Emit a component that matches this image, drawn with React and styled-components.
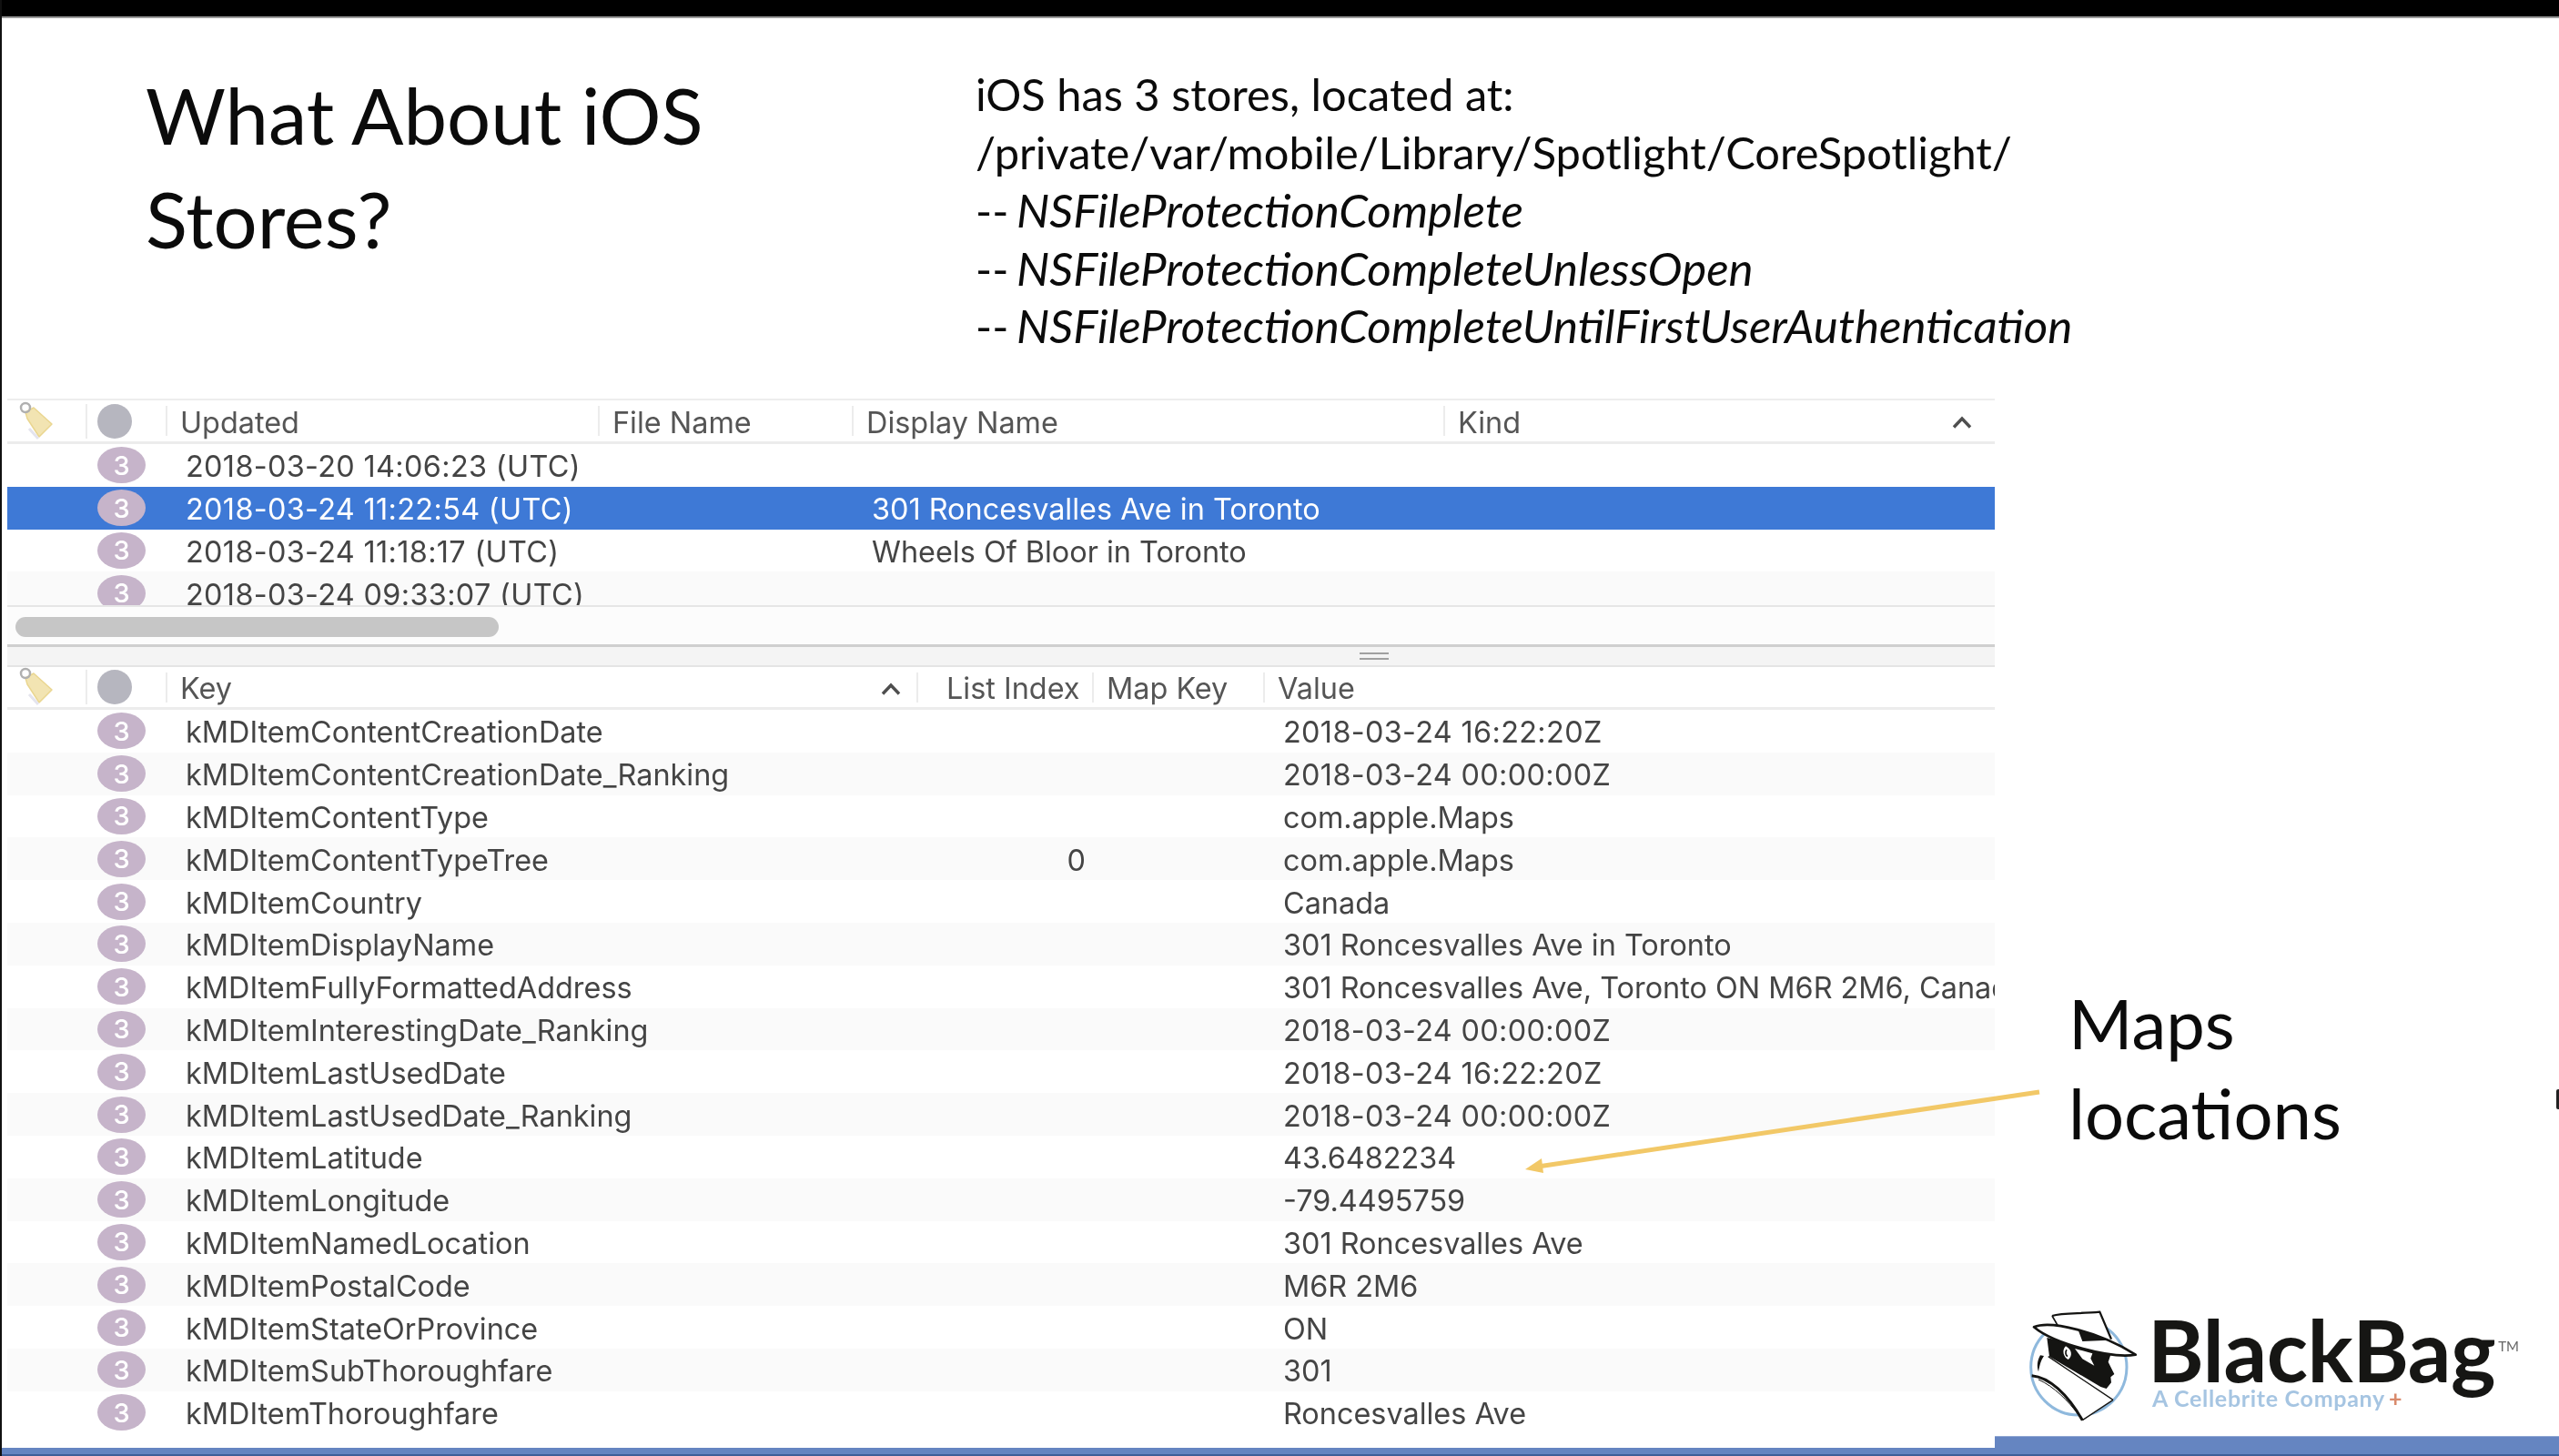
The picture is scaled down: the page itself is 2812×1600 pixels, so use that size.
import React from "react";
import styled, { createGlobalStyle } from "styled-components";

const Global = createGlobalStyle`
  html, body { margin: 0; padding: 0; background: #fff; }
  * { box-sizing: border-box; }
`;

const Page = styled.div`
  position: relative;
  width: 2812px;
  height: 1600px;
  overflow: hidden;
  display: flex;
  flex-direction: column;
  background: #fff;
  border-left: 2px solid #111;
  filter: blur(0.5px);
`;
const TopBar = styled.div`
  height: 20px;
  flex: none;
  background: #000;
  border-bottom: 2px solid #9a9a9a;
  margin-left: -2px;
`;
const Head = styled.header`
  height: 418px;
  flex: none;
  display: flex;
  padding: 50px 0 0 158px;
`;
const Title = styled.h1`
  width: 912px;
  margin: 0;
  font: 400 85px/113.5px Lato, "Open Sans", sans-serif;
  color: #0b0b0b;
`;
const Body = styled.div`
  padding-top: 2px;
  font: 400 48.8px/63.6px Lato, "Open Sans", sans-serif;
  color: #0b0b0b;
  white-space: nowrap;
`;
const BodyLine = styled.div`
  display: flex;
  align-items: baseline;
  height: 63.6px;
`;
const Dash = styled.span`
  width: 45px;
  flex: none;
`;
const Protection = styled.i`
  font-size: 51.1px;
`;
const Workspace = styled.div`
  flex: 1;
  display: flex;
  min-height: 0;
`;
const Panel = styled.section`
  width: 2184px;
  margin-left: 6px;
  flex: none;
  display: flex;
  flex-direction: column;
  font-family: Inter, Roboto, sans-serif;
  font-size: 32.4px;
  color: #444;
  overflow: hidden;
`;
const TOP_COLS = "86px 88px 475px 279px 650px 1fr";
const KEY_COLS = "86px 88px 825px 193px 188px 1fr";
const HeaderRow = styled.div`
  display: grid;
  grid-template-columns: ${(p) => p.$cols};
  align-items: center;
  flex: none;
  background: #fff;
  border-top: 2px solid #ededed;
  border-bottom: 3px solid #ececec;
`;
const TopHeader = styled(HeaderRow)`
  height: 50px;
`;
const KeyHeader = styled(HeaderRow)`
  height: 47px;
  border-top: 0;
`;
const HeadCell = styled.div`
  display: flex;
  align-items: center;
  justify-content: space-between;
  height: 33px;
  padding: 3px ${(p) => p.$end ?? 0}px 0 ${(p) => p.$start ?? 14}px;
  color: #555;
  white-space: nowrap;
  border-left: 2px solid #ececec;
`;
const IconCell = styled.div`
  display: flex;
  align-items: center;
  height: 38px;
  padding-left: ${(p) => p.$pad}px;
`;
const DotCell = styled(IconCell)`
  border-left: 2px solid #ececec;
`;
const StatusDot = styled.span`
  width: 38px;
  height: 38px;
  flex: none;
  border-radius: 50%;
  background: #b6b6bf;
`;
const Rows = styled.div`
  flex: none;
  height: ${(p) => p.$height}px;
  overflow: hidden;
  background: #fff;
`;
const Row = styled.div`
  display: grid;
  grid-template-columns: ${(p) => p.$cols};
  align-items: center;
  height: 46.8px;
  white-space: nowrap;
  background: ${(p) => (p.$selected ? "#3e79d6" : p.$zebra ? "#fafafa" : "#fff")};
  color: ${(p) => (p.$selected ? "#fff" : "#444")};
`;
const Badge = styled.span`
  width: 53px;
  height: 40px;
  margin-left: 13px;
  border-radius: 50%;
  display: flex;
  align-items: center;
  justify-content: center;
  background: #c6b4ca;
  color: #fff;
  font-size: 29px;
  font-weight: 500;
`;
const Cell = styled.span`
  padding: 3px 0 0 22px;
  min-width: 0;
  overflow: hidden;
  line-height: 43px;
  letter-spacing: ${(p) => (p.$date ? "0.34px" : "0")};
`;
const NumCell = styled(Cell)`
  padding: 3px ${(p) => p.$right}px 0 0;
  text-align: right;
`;
const ScrollTrack = styled.div`
  height: 43px;
  flex: none;
  padding: 11px 0 0 9px;
  background: #fcfcfc;
  border-top: 2px solid #e6e6e6;
`;
const ScrollThumb = styled.div`
  width: 531px;
  height: 22px;
  border-radius: 11px;
  background: #c6c6c6;
`;
const Splitter = styled.div`
  height: 25px;
  flex: none;
  display: flex;
  align-items: center;
  padding-left: 1486px;
  background: #f4f4f4;
  border-top: 3px solid #cfcfcf;
  border-bottom: 2px solid #e4e4e4;
`;
const Grip = styled.span`
  width: 32px;
  height: 8px;
  border-top: 2px solid #a0a0a0;
  border-bottom: 2px solid #a0a0a0;
`;
const Aside = styled.aside`
  flex: 1;
  min-width: 0;
  display: flex;
  flex-direction: column;
`;
const MapsNote = styled.div`
  margin: 636px 0 0 81px;
  font: 400 76px/99px Lato, "Open Sans", sans-serif;
  color: #0b0b0b;
`;
const Logo = styled.div`
  margin: auto 0 0 28px;
  display: flex;
  gap: 15px;
  height: 148px;
`;
const LogoWords = styled.div`
  padding-top: 6px;
  display: flex;
  flex-direction: column;
`;
const LogoName = styled.div`
  display: flex;
  align-items: flex-start;
  margin-left: -5px;
  font: 700 94px/94px Lato, "Open Sans", sans-serif;
  letter-spacing: -0.5px;
  color: #161614;
`;
const LogoTm = styled.span`
  margin: 36px 0 0 3px;
  font: 400 15px/15px Lato, sans-serif;
  letter-spacing: 0;
  color: #666;
`;
const LogoSub = styled.div`
  margin-top: -7px;
  font: 700 25px/26px Lato, "Open Sans", sans-serif;
  letter-spacing: 0.7px;
  color: #a6c5e2;
  white-space: nowrap;
`;
const LogoPlus = styled.span`
  color: #d98a6c;
  margin-left: 4px;
`;
const AsideStrip = styled.div`
  height: 13px;
  flex: none;
  background: #6585c1;
  border-top: 1px solid #8ea5d2;
`;
const BottomBar = styled.div`
  height: 9px;
  flex: none;
  margin-left: -2px;
  background: #6585c1;
  border-bottom: 2px solid #3f5f99;
`;
const Overlay = styled.svg`
  position: absolute;
  left: -2px;
  top: 0;
  pointer-events: none;
`;
const EdgeMark = styled.span`
  position: absolute;
  right: 0;
  top: 1197px;
  width: 3px;
  height: 22px;
  border-radius: 2px 0 0 2px;
  background: #222;
`;

const TagIcon = () => (
  <svg width="40" height="44" viewBox="0 0 40 44">
    <path d="M8 12 L17 7 L37 25 L23 39 L10 19 Z" fill="#f2e4b2" stroke="#ead690" strokeWidth="1.5" strokeLinejoin="round" />
    <circle cx="8" cy="7" r="5" fill="none" stroke="#b0b0b0" strokeWidth="2.5" />
    <path d="M12 30 L22 41" stroke="#e4e4ee" strokeWidth="3" fill="none" />
  </svg>
);
const Caret = () => (
  <svg width="22" height="14" viewBox="0 0 22 14" fill="none">
    <path d="M2 12.5 L11 3 L20 12.5" stroke="#4e4e4e" strokeWidth="3.4" />
  </svg>
);
const Detective = () => (
  <svg width="130" height="140" viewBox="0 0 390 420">
    <circle cx="193" cy="217" r="158" fill="#fff" stroke="#8fb9dd" strokeWidth="9" />
    <path d="M38 245 C95 250 150 300 205 392 L306 325 L95 185 L60 230 Z" fill="#fff" />
    <path d="M38 245 C95 250 155 305 205 392" fill="none" stroke="#141412" strokeWidth="9" />
    <path d="M60 258 C110 280 160 330 190 372" fill="none" stroke="#141412" strokeWidth="3" />
    <path d="M205 392 L306 325 M92 182 L306 325" fill="none" stroke="#141412" strokeWidth="4" />
    <path d="M66 178 C56 195 54 215 60 232 C64 210 68 195 78 180 Z" fill="#141412" />
    <path d="M88 120 L300 170 L290 200 L310 240 L298 250 L300 268 L284 288 L265 282 L96 182 Z" fill="#141412" />
    <path d="M150 148 C136 160 142 185 158 192 C172 182 172 160 150 148 Z" fill="#fff" />
    <path d="M153 160 C147 168 150 178 156 182" fill="none" stroke="#141412" strokeWidth="5" />
    <path d="M180 156 L238 172 L232 188 L244 212 L205 190 Z" fill="#fff" />
    <path d="M105 48 C125 38 200 40 262 35 L300 125 L125 85 Z" fill="#fff" />
    <path d="M105 48 C140 36 200 42 262 35 L300 125" fill="none" stroke="#141412" strokeWidth="7" />
    <path d="M105 48 L125 82" fill="none" stroke="#141412" strokeWidth="5" />
    <path d="M45 85 C100 62 260 100 380 176 C300 190 110 140 45 85 Z" fill="#fff" stroke="#141412" strokeWidth="8" strokeLinejoin="round" />
    <path d="M190 92 L292 128 L205 132 Z" fill="#141412" />
  </svg>
);

const recent = [
  { when: "2018-03-20 14:06:23 (UTC)", name: "" },
  { when: "2018-03-24 11:22:54 (UTC)", name: "301 Roncesvalles Ave in Toronto", selected: true },
  { when: "2018-03-24 11:18:17 (UTC)", name: "Wheels Of Bloor in Toronto" },
  { when: "2018-03-24 09:33:07 (UTC)", name: "", zebra: true },
];
const items = [
  ["kMDItemContentCreationDate", "2018-03-24 16:22:20Z"],
  ["kMDItemContentCreationDate_Ranking", "2018-03-24 00:00:00Z"],
  ["kMDItemContentType", "com.apple.Maps"],
  ["kMDItemContentTypeTree", "com.apple.Maps", "0"],
  ["kMDItemCountry", "Canada"],
  ["kMDItemDisplayName", "301 Roncesvalles Ave in Toronto"],
  ["kMDItemFullyFormattedAddress", "301 Roncesvalles Ave, Toronto ON M6R 2M6, Canada"],
  ["kMDItemInterestingDate_Ranking", "2018-03-24 00:00:00Z"],
  ["kMDItemLastUsedDate", "2018-03-24 16:22:20Z"],
  ["kMDItemLastUsedDate_Ranking", "2018-03-24 00:00:00Z"],
  ["kMDItemLatitude", "43.6482234"],
  ["kMDItemLongitude", "-79.4495759"],
  ["kMDItemNamedLocation", "301 Roncesvalles Ave"],
  ["kMDItemPostalCode", "M6R 2M6"],
  ["kMDItemStateOrProvince", "ON"],
  ["kMDItemSubThoroughfare", "301"],
  ["kMDItemThoroughfare", "Roncesvalles Ave"],
];
const protections = [
  "NSFileProtectionComplete",
  "NSFileProtectionCompleteUnlessOpen",
  "NSFileProtectionCompleteUntilFirstUserAuthentication",
];
const isDate = (v) => /^\d{4}-/.test(v);

export default function App() {
  return (
    <>
      <Global />
      <Page>
        <TopBar />
        <Head>
          <Title>What About iOS<br />Stores?</Title>
          <Body>
            <BodyLine>iOS has 3 stores, located at:</BodyLine>
            <BodyLine>/private/var/mobile/Library/Spotlight/CoreSpotlight/</BodyLine>
            {protections.map((p) => (
              <BodyLine key={p}>
                <Dash>--</Dash>
                <Protection>{p}</Protection>
              </BodyLine>
            ))}
          </Body>
        </Head>
        <Workspace>
          <Panel>
            <TopHeader $cols={TOP_COLS}>
              <IconCell $pad={12}><TagIcon /></IconCell>
              <DotCell $pad={11}><StatusDot /></DotCell>
              <HeadCell>Updated</HeadCell>
              <HeadCell>File Name</HeadCell>
              <HeadCell>Display Name</HeadCell>
              <HeadCell $end={25}>Kind<Caret /></HeadCell>
            </TopHeader>
            <Rows $height={177}>
              {recent.map((r) => (
                <Row key={r.when} $cols={TOP_COLS} $selected={r.selected} $zebra={r.zebra}>
                  <span />
                  <Badge>3</Badge>
                  <Cell $date>{r.when}</Cell>
                  <span />
                  <Cell>{r.name}</Cell>
                  <span />
                </Row>
              ))}
            </Rows>
            <ScrollTrack><ScrollThumb /></ScrollTrack>
            <Splitter><Grip /></Splitter>
            <KeyHeader $cols={KEY_COLS}>
              <IconCell $pad={12}><TagIcon /></IconCell>
              <DotCell $pad={11}><StatusDot /></DotCell>
              <HeadCell $end={17}>Key<Caret /></HeadCell>
              <HeadCell $start={31}>List Index</HeadCell>
              <HeadCell>Map Key</HeadCell>
              <HeadCell>Value</HeadCell>
            </KeyHeader>
            {items.map(([k, v, idx], i) => (
              <Row key={k} $cols={KEY_COLS} $zebra={i % 2 === 1}>
                <span />
                <Badge>3</Badge>
                <Cell>{k}</Cell>
                <NumCell $right={7}>{idx}</NumCell>
                <span />
                <Cell $date={isDate(v)}>{v}</Cell>
              </Row>
            ))}
          </Panel>
          <Aside>
            <MapsNote>Maps<br />locations</MapsNote>
            <Logo>
              <Detective />
              <LogoWords>
                <LogoName>BlackBag<LogoTm>TM</LogoTm></LogoName>
                <LogoSub>A Cellebrite Company<LogoPlus>+</LogoPlus></LogoSub>
              </LogoWords>
            </Logo>
            <AsideStrip />
          </Aside>
        </Workspace>
        <BottomBar />
        <Overlay width="2812" height="1600" viewBox="0 0 2812 1600">
          <path d="M2241 1200 L1690 1282" stroke="#f2c867" strokeWidth="5" fill="none" />
          <path d="M1676 1285 L1694 1273 L1696 1289 Z" fill="#f2c867" />
        </Overlay>
        <EdgeMark />
      </Page>
    </>
  );
}
